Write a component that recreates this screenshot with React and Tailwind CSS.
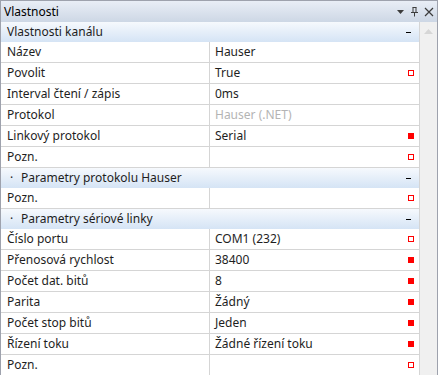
import React from 'react';

const sections = [
  {
    title: 'Vlastnosti kanálu',
    dot: false,
    rows: [
      { name: 'Název', value: 'Hauser' },
      { name: 'Povolit', value: 'True', mark: 'empty' },
      { name: 'Interval čtení / zápis', value: '0ms' },
      { name: 'Protokol', value: 'Hauser (.NET)', disabled: true },
      { name: 'Linkový protokol', value: 'Serial', mark: 'full' },
      { name: 'Pozn.', value: '', mark: 'empty' },
    ],
  },
  {
    title: 'Parametry protokolu Hauser',
    dot: true,
    rows: [{ name: 'Pozn.', value: '', mark: 'empty' }],
  },
  {
    title: 'Parametry sériové linky',
    dot: true,
    rows: [
      { name: 'Číslo portu', value: 'COM1 (232)', mark: 'empty' },
      { name: 'Přenosová rychlost', value: '38400', mark: 'full' },
      { name: 'Počet dat. bitů', value: '8', mark: 'full' },
      { name: 'Parita', value: 'Žádný', mark: 'full' },
      { name: 'Počet stop bitů', value: 'Jeden', mark: 'full' },
      { name: 'Řízení toku', value: 'Žádné řízení toku', mark: 'full' },
      { name: 'Pozn.', value: '', mark: 'empty' },
    ],
  },
];

function Mark({ type }) {
  if (type === 'full') return <span className="w-[6px] h-[6px] bg-[#ff0000]" />;
  if (type === 'empty') return <span className="w-[6px] h-[6px] border border-[#ff0000] bg-white" />;
  return null;
}

function Row({ row }) {
  return (
    <div className="flex h-[21px] border-b border-[#d5d5d5]">
      <div className="w-[209px] shrink-0 border-r border-[#d5d5d5] pl-[6px] leading-[20px] text-[#1e1e1e]">
        {row.name}
      </div>
      <div className="flex-1 flex items-center pl-[5px] pr-[5px]">
        <span className={'flex-1 leading-[20px] ' + (row.disabled ? 'text-[#b4b4b4]' : 'text-[#1e1e1e]')}>
          {row.value}
        </span>
        <Mark type={row.mark} />
      </div>
    </div>
  );
}

function Category({ section }) {
  return (
    <div className="flex items-center h-[20px] bg-gradient-to-b from-[#f6f9fd] to-[#d5e4f5] text-[#1e1e1e]">
      {section.dot ? (
        <>
          <span className="w-[20px] pl-[9px] leading-[20px]">·</span>
          <span className="flex-1 leading-[20px]">{section.title}</span>
        </>
      ) : (
        <span className="flex-1 pl-[6px] leading-[20px]">{section.title}</span>
      )}
      <span className="w-[5px] h-[1px] bg-black mr-[8px]" />
    </div>
  );
}

export default function App() {
  return (
    <div
      className="w-[438px] h-[375px] overflow-hidden bg-white text-[12px] border-l border-r border-[#9ea2ad] flex flex-col"
      style={{ fontFamily: '"Noto Sans", "DejaVu Sans", sans-serif' }}
    >
      <div className="h-[22px] shrink-0 flex items-center bg-gradient-to-b from-[#e9eef6] to-[#cdd7e5] border-t border-[#9ea2ad] pl-[3px] pr-[3px]">
        <span className="flex-1 text-black">Vlastnosti</span>
        <svg width="9" height="6" viewBox="0 0 9 6" className="mr-[5px]">
          <path d="M1 1h7L4.5 5z" fill="#3c3c3c" />
        </svg>
        <svg width="9" height="11" viewBox="0 0 9 11" className="mr-[5px]">
          <path d="M2.5 1.5h4M3 1.5v5M6 1.5v5M1 6.5h7M4.5 6.5v4" stroke="#3c3c3c" strokeWidth="1" fill="none" />
        </svg>
        <svg width="10" height="10" viewBox="0 0 10 10">
          <path d="M1 1l8 8M9 1l-8 8" stroke="#3c3c3c" strokeWidth="1.2" />
        </svg>
      </div>
      <div className="flex flex-1 min-h-0">
        <div className="flex-1 border-r border-[#d5d5d5]">
          {sections.map((s) => (
            <div key={s.title}>
              <Category section={s} />
              {s.rows.map((r, i) => (
                <Row key={i} row={r} />
              ))}
            </div>
          ))}
        </div>
        <div className="w-[17px] shrink-0 bg-[#f0f0f0] flex justify-center pt-[7px]">
          <svg width="9" height="5" viewBox="0 0 9 5">
            <path d="M0 5L4.5 0L9 5z" fill="#d6d6d6" />
          </svg>
        </div>
      </div>
    </div>
  );
}
